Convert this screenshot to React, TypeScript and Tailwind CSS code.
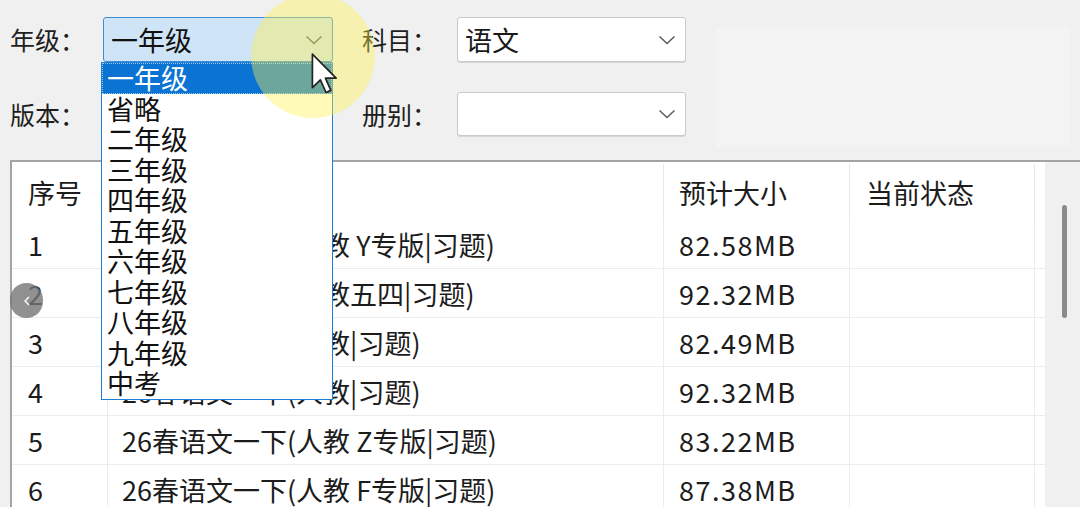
import React from "react";

const grades = [
  "一年级",
  "省略",
  "二年级",
  "三年级",
  "四年级",
  "五年级",
  "六年级",
  "七年级",
  "八年级",
  "九年级",
  "中考",
];

const rows = [
  ["1", "26春语文一下(人教 Y专版|习题)", "82.58MB"],
  ["2", "26春语文一下(人教五四|习题)", "92.32MB"],
  ["3", "26春语文一下(人教|习题)", "82.49MB"],
  ["4", "26春语文一下(人教|习题)", "92.32MB"],
  ["5", "26春语文一下(人教 Z专版|习题)", "83.22MB"],
  ["6", "26春语文一下(人教 F专版|习题)", "87.38MB"],
];

function Chevron() {
  return (
    <svg width="18" height="10" viewBox="0 0 18 10" className="shrink-0">
      <polyline
        points="1.5,1.5 9,8.5 16.5,1.5"
        fill="none"
        stroke="#5c5c5c"
        strokeWidth="1.5"
      />
    </svg>
  );
}

function Label({ text }: { text: string }) {
  return (
    <div className="flex items-center text-[25px] leading-none text-[#1e1e1e]">
      {text}
    </div>
  );
}

function Combo({ value }: { value: string }) {
  return (
    <div className="flex items-center justify-between rounded-[3px] border border-[#c9c9c9] bg-white pl-[7px] pr-[9px] shadow-[0_1px_0_#d6d6d6]">
      <span className="text-[27px] leading-none text-[#1a1a1a]">{value}</span>
      <Chevron />
    </div>
  );
}

const App: React.FC = () => {
  return (
    <div className="relative flex h-[507px] w-[1080px] flex-col overflow-hidden bg-[#f0f0f0] font-['Noto_Sans_CJK_SC','Microsoft_YaHei',sans-serif]">
      {/* Filter area */}
      <div className="flex h-[160px] shrink-0 pl-[10px] pt-[17px]">
        <div className="grid grid-cols-[93px_230px_29px_95px_229px] grid-rows-[45px_44px] gap-y-[30px]">
          <Label text="年级：" />
          <div className="relative">
            <div className="flex h-full items-center justify-between rounded-[3px] border border-[#3f8fd8] bg-[#cfe4f7] pl-[7px] pr-[9px]">
              <span className="text-[27px] leading-none text-[#111]">一年级</span>
              <Chevron />
            </div>
            {/* Open dropdown list */}
            <div className="absolute left-[-2px] top-[45px] z-10 w-[232px] border-[1.5px] border-[#1c7fd8] bg-white">
              {grades.map((g, i) => (
                <div
                  key={g}
                  className={
                    i === 0
                      ? "h-[30.5px] border border-dotted border-[#9cc8ef] bg-[#0a73d3] pl-[4px] text-[27px] leading-[28px] text-white"
                      : "h-[30.5px] pl-[5px] text-[27px] leading-[30px] text-[#111]"
                  }
                >
                  {g}
                </div>
              ))}
            </div>
          </div>
          <div />
          <Label text="科目：" />
          <Combo value="语文" />

          <Label text="版本：" />
          <Combo value="" />
          <div />
          <Label text="册别：" />
          <Combo value="" />
        </div>
        <div className="ml-[30px] mt-[10px] h-[120px] w-[354px] bg-[#f3f3f3]" />
      </div>

      {/* Resource table */}
      <div className="ml-[10px] flex flex-1 border-l-2 border-t-2 border-[#a4a4a4]">
        <div className="flex w-[1033px] flex-col bg-white text-[27px] leading-none text-[#1c1c1c]">
          <div className="flex h-[58px] shrink-0 pt-[2px]">
            <div className="flex w-[96px] items-center border-r border-[#e6e6e6] pl-[16px]">序号</div>
            <div className="w-[556px] border-r border-[#e6e6e6]" />
            <div className="flex w-[186px] items-center border-r border-[#e6e6e6] pl-[15px]">预计大小</div>
            <div className="flex w-[185px] items-center border-r border-[#e6e6e6] pl-[16px]">当前状态</div>
          </div>
          {rows.map((r) => (
            <div key={r[0]} className="flex h-[49px] shrink-0 border-b border-[#ececec]">
              <div className="flex w-[96px] items-center border-r border-[#ececec] pl-[16px]">{r[0]}</div>
              <div className="flex w-[556px] items-center border-r border-[#ececec] pl-[14px]">{r[1]}</div>
              <div className="flex w-[186px] items-center border-r border-[#ececec] pl-[15px] tracking-[1.5px]">{r[2]}</div>
              <div className="w-[185px] border-r border-[#ececec]" />
            </div>
          ))}
        </div>
        <div className="flex-1 bg-[#f0f0f0] pl-[17px] pt-[43px]">
          <div className="h-[113px] w-[5px] rounded-full bg-[#8b8b8b]" />
        </div>
      </div>

      {/* Video player back button */}
      <div className="absolute left-[10px] top-[283px] flex h-[35px] w-[33px] items-center justify-center rounded-full bg-[#767676]/80">
        <svg width="8" height="12" viewBox="0 0 8 12">
          <polyline points="6,2 2,6 6,10" fill="none" stroke="#fff" strokeWidth="1.4" />
        </svg>
      </div>

      {/* Cursor highlight */}
      <div className="pointer-events-none absolute left-[251px] top-[-6px] z-20 h-[124px] w-[124px] rounded-full bg-[#fff34a]/40" />
      <svg
        className="pointer-events-none absolute left-[311px] top-[53px] z-30"
        width="28"
        height="42"
        viewBox="0 0 13 20"
      >
        <path
          d="M0.5,0.5 L0.5,16.5 L4.3,12.8 L7,18.8 L9.3,17.8 L6.7,12 L11.8,12 Z"
          fill="#fff"
          stroke="#222"
          strokeWidth="0.8"
          strokeLinejoin="round"
        />
      </svg>
    </div>
  );
};

export default App;
